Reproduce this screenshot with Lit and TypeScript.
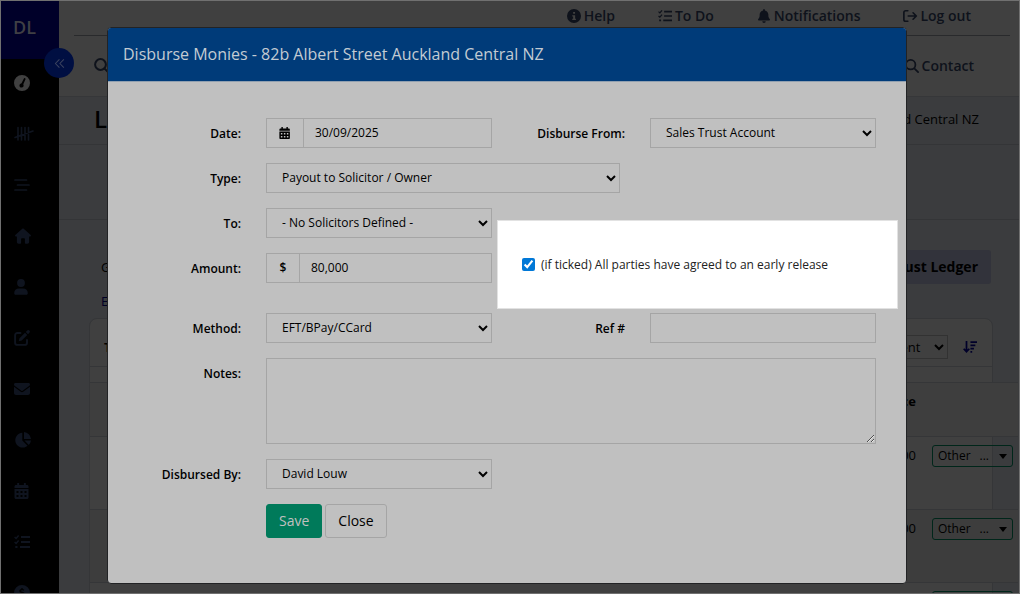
import { LitElement, html, css, svg } from "lit";
import { customElement, property } from "lit/decorators.js";

const glyphs: Record<string, unknown> = {
  info: svg`<path fill-rule="evenodd" d="M8 0a8 8 0 1 0 0 16A8 8 0 0 0 8 0zM7 3.4h2.200v2.100H7zM6 7h3.300v4h.9v1.500H6V11h1V8.500H6z"/>`,
  tasks: svg`<g fill="none" stroke="currentColor"><path stroke-width="1.4" d="M.6 3l1.500 1.400L4.600 1.500M.6 8l1.500 1.400L4.600 6.500"/><path stroke-width="1.900" d="M7 3h9M7 8h9M6 13h10M1.300 13h2.200"/></g>`,
  bell: svg`<path d="M8 0c.6 0 1 .4 1 1v.6c2.300.500 4 2.400 4 4.900v1.200c0 1.500.6 2.700 1.500 3.700.7.8.2 1.600-.6 1.600H2.100c-.8 0-1.300-.8-.6-1.600C2.400 10.400 3 9.200 3 7.700V6.500c0-2.500 1.700-4.400 4-4.900V1c0-.6.4-1 1-1zM6 14h4a2 2 0 0 1-4 0z"/>`,
  logout: svg`<path fill="none" stroke="currentColor" stroke-width="1.900" stroke-linecap="round" stroke-linejoin="round" d="M5.500 2H3a2 2 0 0 0-2 2v8a2 2 0 0 0 2 2h2.500M6 8h9M11.500 4.300L15.200 8l-3.700 3.700"/>`,
  search: svg`<g fill="none" stroke="currentColor" stroke-width="2" stroke-linecap="round"><circle cx="6.500" cy="6.500" r="5.400"/><path d="M10.600 10.600L15 15"/></g>`,
  gauge: svg`<path fill-rule="evenodd" d="M8 0a8 8 0 1 0 0 16A8 8 0 0 0 8 0zM11 3.200c.6.300.7.9.4 1.400L9.300 9.200c.9 1.500 0 3.400-1.700 3.400-2.200 0-2.900-2.900-1.100-3.900l1-.4 2.300-4.600c.2-.5.7-.8 1.200-.5z"/>`,
  tally: svg`<path fill="none" stroke="currentColor" stroke-width="1.600" stroke-linecap="round" d="M4 1.500v12.500M7.500 1.500v12.500M11 1.500v12.500M14.500 1.500v12.500M1 11.500l18-6.500"/>`,
  lines: svg`<path fill="none" stroke="currentColor" stroke-width="1.700" stroke-linecap="round" d="M1 3h11.500M3.500 8H15M1 13h11.500"/>`,
  home: svg`<path d="M9 .4c.3 0 .5.100.7.300l7 6.300c.5.500.3 1.400-.6 1.400h-1V14c0 1.100-.7 1.700-1.700 1.700h-1.600c-.6 0-.9-.4-.9-.9V11c0-.5-.3-.8-.8-.8H7.900c-.5 0-.8.300-.8.800v3.800c0 .5-.3.900-.9.900H4.600c-1 0-1.700-.6-1.700-1.700V8.400h-1C1 8.400.8 7.500 1.300 7l7-6.300c.2-.2.4-.3.7-.3z"/>`,
  user: svg`<circle cx="7" cy="4" r="3.900"/><path d="M5 9.600h4c3 0 4.800 2 4.800 4.700 0 .9-.6 1.500-1.300 1.500h-11c-.7 0-1.300-.6-1.300-1.500C.2 11.600 2 9.600 5 9.600z"/>`,
  edit: svg`<path fill="none" stroke="currentColor" stroke-width="1.900" stroke-linecap="round" d="M6.500 3H3.300A2.200 2.200 0 0 0 1.100 5.200v7.500a2.200 2.200 0 0 0 2.200 2.200h7.500a2.200 2.200 0 0 0 2.200-2.200V10"/><path d="M5.500 8.300L11 2.800 13.200 5l-5.500 5.500-3 .7zM11.800 2l1.400-1.400a1.500 1.500 0 0 1 2.200 2.200L14 4.200z"/>`,
  mail: svg`<path d="M1.500 2h13c.9 0 1.500.6 1.500 1.500 0 .5-.2.9-.6 1.200L8.600 9.800a1 1 0 0 1-1.200 0L.6 4.700C.2 4.400 0 4 0 3.500 0 2.600.6 2 1.500 2zM0 5.800l6.800 5c.7.600 1.700.6 2.400 0l6.800-5V12c0 1.100-.9 2-2 2H2c-1.100 0-2-.9-2-2z"/>`,
  pie: svg`<path d="M8.300.8v7.800l5.200 5.200A7.400 7.400 0 1 1 8.300.8zM10 0a7.500 7.500 0 0 1 7 7h-7zM10.500 8.600H17a7.500 7.500 0 0 1-2.200 4.400z"/>`,
  calendar: svg`<path fill-rule="evenodd" d="M3.200 0h1.900v2h4.800V0h1.900v2h1.200c.8 0 1.500.7 1.500 1.500V5H.5V3.500C.5 2.700 1.200 2 2 2h1.200zM.5 6h14v8.500c0 .8-.7 1.500-1.500 1.500H2c-.8 0-1.500-.7-1.500-1.500zM2.500 8v2h2V8zM6.500 8v2h2V8zM10.500 8v2h2V8zM2.500 12v2h2v-2zM6.500 12v2h2v-2zM10.500 12v2h2v-2z"/>`,
  coin: svg`<path fill-rule="evenodd" d="M8 0a8 8 0 1 0 0 16A8 8 0 0 0 8 0zM7.300 3h1.400v1l1.500.4-.3 1.300C8 5.200 7 5.200 7 6s4 .8 4 3c0 1.300-.9 2-2.300 2.200V13H7.300v-1.700l-1.900-.5.4-1.400c1.600.6 3.400.7 3.400-.2 0-1-3.900-.9-3.900-3.100 0-1.100.8-1.900 2-2.100z"/>`,
  collapse: svg`<path fill="none" stroke="currentColor" stroke-width="1.500" stroke-linecap="round" stroke-linejoin="round" d="M7.500 2.500L2 8l5.500 5.500M14 2.500L8.500 8l5.500 5.500"/>`,
  sort: svg`<path fill="none" stroke="currentColor" stroke-width="2" d="M4 1v12M.8 10L4 13.500 7.200 10M8.500 2.500H16M8.500 6.200h5.600M8.500 9.900h4M8.500 13.500h2"/>`,
};

const icon = (name: string) =>
  html`<svg class="icon" viewBox="0 0 16 16" fill="currentColor" aria-hidden="true">${glyphs[name]}</svg>`;

const base = css`
  :host,
  * {
    box-sizing: border-box;
  }
  .icon {
    width: 16px;
    height: 16px;
    display: block;
    flex: none;
    overflow: visible;
  }
  a {
    color: inherit;
    text-decoration: none;
  }
  button,
  input,
  select,
  textarea {
    font: inherit;
    color: inherit;
    margin: 0;
  }
`;

@customElement("side-nav")
export class SideNav extends LitElement {
  @property({ type: Array }) items: string[] = [
    "gauge", "tally", "lines", "home", "user", "edit", "mail", "pie", "calendar", "tasks", "coin",
  ];

  static styles = [
    base,
    css`
      :host {
        display: block;
        position: relative;
        width: 58px;
        background: #000;
        color: #0f141f;
      }
      .logo {
        display: flex;
        align-items: center;
        height: 58px;
        padding: 0 12px 6px;
        background: #000029;
        color: #3f3f44;
        font-size: 18px;
        font-weight: 600;
      }
      .toggle {
        position: absolute;
        left: 43px;
        top: 47px;
        width: 30px;
        height: 30px;
        padding: 0;
        border: 0;
        border-radius: 50%;
        background: #000f42;
        color: #3d4560;
        display: grid;
        place-items: center;
      }
      .toggle .icon {
        width: 11px;
        height: 11px;
      }
      nav {
        margin-top: -2px;
      }
      .item {
        display: flex;
        align-items: center;
        height: 51px;
        padding: 0 13px;
      }
      .item:first-child {
        color: #404040;
      }
    `,
  ];

  render() {
    return html`
      <a class="logo" href="#">DL</a>
      <nav>${this.items.map((n) => html`<a class="item" href="#" aria-label=${n}>${icon(n)}</a>`)}</nav>
      <button class="toggle" aria-label="Collapse">${icon("collapse")}</button>
    `;
  }
}

interface Row {
  balance: string;
  action: string;
}

@customElement("ledger-page")
export class LedgerPage extends LitElement {
  @property({ type: Array }) rows: Row[] = [
    { balance: "0.00", action: "Other" },
    { balance: "0.00", action: "Other" },
    { balance: "", action: "" },
  ];

  static styles = [
    base,
    css`
      :host {
        display: block;
        min-width: 0;
        background: #3b3c3e;
        color: #000;
        font-size: 13px;
      }
      .top {
        background: #404040;
        border-bottom: 1px solid #363739;
        padding: 0 9px 0 15px;
        color: #0e121b;
        font-size: 14px;
        line-height: 20px;
        font-weight: 600;
      }
      .links,
      .tools {
        display: flex;
        align-items: center;
      }
      .links {
        justify-content: flex-end;
        gap: 43px;
        height: 35px;
        padding: 0 39px 5px 0;
        border-bottom: 1px solid #292a2c;
      }
      .tools {
        justify-content: space-between;
        height: 60px;
        padding: 0 36px 0 20px;
      }
      .link {
        display: flex;
        align-items: center;
        gap: 3px;
      }
      .link .icon {
        width: 14px;
        height: 14px;
      }
      .find .icon {
        width: 16px;
        height: 16px;
      }
      .title {
        display: flex;
        align-items: center;
        justify-content: space-between;
        height: 48px;
        padding: 0 40px 4px 35px;
        border-bottom: 1px solid #343537;
      }
      h1 {
        margin: 0;
        font-size: 24px;
        line-height: 32px;
        font-weight: 600;
      }
      .strip {
        height: 75px;
        border-bottom: 1px solid #343537;
      }
      .content {
        padding: 30px 26px 0 30px;
      }
      .tabs {
        display: flex;
        justify-content: space-between;
        align-items: center;
        height: 34px;
      }
      .tab {
        padding: 0 12px;
        line-height: 34px;
      }
      .active {
        padding: 0 13px;
        margin-right: 2px;
        border-radius: 3px;
        background: #32333b;
        font-size: 14px;
        font-weight: 700;
      }
      .sub {
        height: 34px;
        padding: 0 12px;
        line-height: 34px;
        color: #000024;
      }
      .card {
        border: 1px solid #353638;
        border-radius: 8px 8px 0 0;
        background: #404040;
        height: 400px;
      }
      .head {
        display: flex;
        align-items: center;
        gap: 15px;
        height: 48px;
        padding: 8px 15px 0 14px;
        border-bottom: 1px solid #353638;
        margin-bottom: 15px;
      }
      .head b {
        margin-right: auto;
      }
      .head select {
        width: 120px;
        height: 24px;
        border: 1px solid #323232;
        border-radius: 0;
        background: #404040;
        padding: 0 0 0 46px;
      }
      .sort {
        border: 0;
        background: none;
        padding: 0;
        color: #000029;
      }
      .sort .icon {
        width: 14px;
        height: 14px;
      }
      table {
        width: calc(100% + 26px);
        border-collapse: collapse;
        line-height: 18px;
      }
      th,
      td {
        height: 73px;
        padding: 9px 0 0;
        vertical-align: top;
        text-align: right;
        border-top: 1px solid #353638;
      }
      th {
        height: 54px;
        background: #3e3e3e;
      }
      tr:nth-child(even) td {
        background: #3d3d3d;
      }
      .act {
        width: 102px;
        padding: 8px 0 0 16px;
      }
      .more {
        display: flex;
        align-items: center;
        justify-content: space-between;
        width: 81px;
        height: 22px;
        padding: 0 5px;
        border: 1px solid #00261a;
        border-radius: 3px;
        background: transparent;
        font-size: 12px;
      }
      .dots {
        margin-left: auto;
        margin-right: 10px;
      }
      .caret {
        border: 4px solid transparent;
        border-top: 5px solid #000;
        border-bottom: 0;
      }
    `,
  ];

  render() {
    return html`
      <header class="top">
        <nav class="links">
          <a class="link" href="#">${icon("info")}Help</a>
          <a class="link" href="#">${icon("tasks")}To Do</a>
          <a class="link" href="#">${icon("bell")}Notifications</a>
          <a class="link" href="#">${icon("logout")}Log out</a>
        </nav>
        <div class="tools">
          <a class="link find" href="#" aria-label="Search">${icon("search")}</a>
          <a class="link" href="#">${icon("search")}Contact</a>
        </div>
      </header>
      <div class="title">
        <h1>Listing</h1>
        <span>82b Albert Street Auckland Central NZ</span>
      </div>
      <div class="strip"></div>
      <div class="content">
        <div class="tabs"><a class="tab" href="#">General</a><a class="tab active" href="#">Trust Ledger</a></div>
        <div class="sub">Entries</div>
        <section class="card">
          <div class="head">
            <b>Trust</b>
            <select aria-label="Sort by"><option>Recent</option></select>
            <button class="sort" aria-label="Sort order">${icon("sort")}</button>
          </div>
          <table>
            <thead>
              <tr><th>Balance</th><th class="act"></th></tr>
            </thead>
            <tbody>
              ${this.rows.map(
                (r) => html`<tr>
                  <td>${r.balance}</td>
                  <td class="act">
                    <button class="more" aria-label="Actions">
                      <span>${r.action}</span>
                      <span class="dots">${r.action ? "..." : ""}</span>
                      <span class="caret"></span>
                    </button>
                  </td>
                </tr>`
              )}
            </tbody>
          </table>
        </section>
      </div>
    `;
  }
}

@customElement("disburse-dialog")
export class DisburseDialog extends LitElement {
  static styles = [
    base,
    css`
      :host {
        display: block;
        width: 100%;
        max-width: 800px;
        border: 1px solid #222325;
        border-radius: 4px;
        overflow: hidden;
        background: #c0c0c0;
        color: #000;
        font-size: 12px;
        line-height: 18px;
      }
      h2 {
        margin: 0;
        padding: 14px 15px;
        border-bottom: 1px solid #91a0b0;
        background: #003b79;
        color: #c3cbd3;
        font-size: 16px;
        line-height: 25px;
        font-weight: 400;
      }
      form {
        display: grid;
        grid-template-columns: 103fr 226fr 108fr 226fr;
        gap: 15px 25px;
        padding: 36px 30px 45px;
      }
      .name {
        grid-column: 1;
        padding-top: 7px;
        font-weight: 600;
        text-align: right;
        white-space: nowrap;
      }
      .second {
        grid-column: 3;
      }
      .field,
      .group {
        width: 100%;
        height: 30px;
        border: 1px solid #a5a5a5;
        border-radius: 0;
        background: #c0c0c0;
      }
      select.field {
        padding: 0 0 2px 11px;
      }
      input.field {
        padding: 0 11px;
      }
      .wide {
        grid-column: 2 / -1;
      }
      .type {
        width: 58%;
      }
      textarea.field {
        display: block;
        height: 86px;
        resize: vertical;
      }
      .group {
        display: flex;
      }
      .addon {
        display: grid;
        place-items: center;
        min-width: 33px;
        padding: 0 12px;
        border-right: 1px solid #a5a5a5;
        font-weight: 600;
      }
      .addon .icon {
        width: 12px;
        height: 14px;
      }
      .group input {
        flex: 1;
        min-width: 0;
        border: 0;
        padding: 0 11px;
        background: transparent;
      }
      .amount {
        margin-bottom: 15px;
      }
      .callout {
        grid-column: 3 / -1;
        grid-row: 3 / span 2;
        display: flex;
        align-items: center;
        gap: 6px;
        margin: 12px -22px -11px -20px;
        padding: 0 24px;
        border: 1px solid #e2e2e2;
        background: #fff;
        color: #222;
      }
      .callout input {
        width: 13px;
        height: 13px;
        accent-color: #0078d7;
      }
      .buttons {
        grid-column: 2;
        display: flex;
        gap: 3px;
      }
      .btn {
        height: 34px;
        padding: 0 12px;
        border: 1px solid #a5a5a5;
        border-radius: 3px;
        background: #c0c0c0;
        font-size: 14px;
      }
      .save {
        border-color: #007a5a;
        background: #007a5a;
        color: #c0c0c0;
      }
    `,
  ];

  render() {
    return html`
      <h2>Disburse Monies - 82b Albert Street Auckland Central NZ</h2>
      <form>
        <label class="name" for="date">Date:</label>
        <div class="group">
          <span class="addon">${icon("calendar")}</span><input id="date" value="30/09/2025" />
        </div>
        <label class="name second" for="from">Disburse From:</label>
        <select class="field" id="from"><option>Sales Trust Account</option></select>

        <label class="name" for="type">Type:</label>
        <div class="wide">
          <select class="field type" id="type"><option>Payout to Solicitor / Owner</option></select>
        </div>

        <label class="name" for="to">To:</label>
        <select class="field" id="to"><option>- No Solicitors Defined -</option></select>

        <label class="name" for="amount">Amount:</label>
        <div class="group amount">
          <span class="addon">$</span><input id="amount" value="80,000" />
        </div>
        <label class="callout">
          <input type="checkbox" checked />
          <span>(if ticked) All parties have agreed to an early release</span>
        </label>

        <label class="name" for="method">Method:</label>
        <select class="field" id="method"><option>EFT/BPay/CCard</option></select>
        <label class="name second" for="ref">Ref #</label>
        <input class="field" id="ref" />

        <label class="name" for="notes">Notes:</label>
        <textarea class="field wide" id="notes"></textarea>

        <label class="name" for="by">Disbursed By:</label>
        <select class="field" id="by"><option>David Louw</option></select>

        <div class="buttons">
          <button class="btn save" type="button">Save</button>
          <button class="btn" type="button">Close</button>
        </div>
      </form>
    `;
  }
}

@customElement("app-root")
export class AppRoot extends LitElement {
  static styles = css`
    :host {
      display: block;
      position: relative;
      box-sizing: border-box;
      height: 100vh;
      overflow: hidden;
      border: 1px solid #707070;
      font-family: "Open Sans", "Noto Sans", sans-serif;
    }
    .shell {
      display: grid;
      grid-template-columns: auto minmax(0, 1fr);
      height: 100%;
    }
    side-nav {
      z-index: 1;
    }
    .layer {
      position: absolute;
      z-index: 2;
      inset: 0;
      display: flex;
      justify-content: center;
      align-items: flex-start;
      padding: 26px 20px 0 14px;
    }
  `;

  render() {
    return html`
      <div class="shell">
        <side-nav></side-nav>
        <ledger-page></ledger-page>
      </div>
      <div class="layer"><disburse-dialog role="dialog"></disburse-dialog></div>
    `;
  }
}
